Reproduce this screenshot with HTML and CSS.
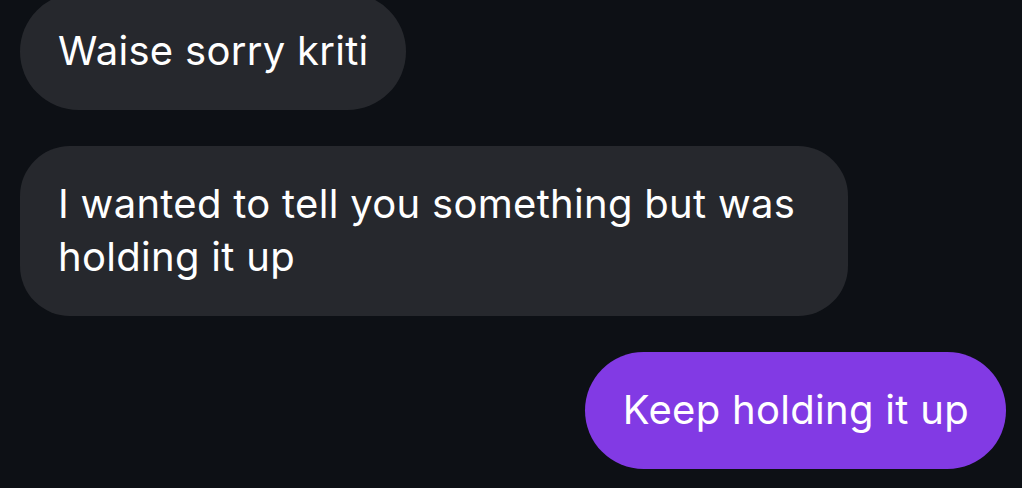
FILE: index.html
```html
<!DOCTYPE html>
<html lang="en">

<head>
    <meta charset="UTF-8">
    <meta name="viewport" content="width=device-width, initial-scale=1.0">
    <title>Chat</title>
    <link rel="stylesheet" href="styles.css">
</head>

<body>
    <div class="thread">
        <div class="bubble incoming">Waise sorry kriti</div>
        <div class="bubble incoming wide">I wanted to tell you something but was holding it up</div>
        <div class="bubble outgoing">Keep holding it up</div>
    </div>
</body>

</html>
```

FILE: styles.css
```css
/* General styles */
* {
    box-sizing: border-box;
}

html,
body {
    height: 100%;
}

body {
    font-family: Inter, "Noto Sans", sans-serif;
    margin: 0;
    padding: 0;
    background-color: #0d1015;
    color: #ffffff;
    overflow: hidden;
}

.thread {
    display: flex;
    flex-direction: column;
    gap: 36px;
    padding: 0 16px 0 20px;
    margin-top: -7px;
}

.bubble {
    font-size: 40px;
    line-height: 53px;
    letter-spacing: 0.3px;
    padding: 31px 37px 33px 38px;
    border-radius: 60px;
    max-width: 828px;
}

.incoming {
    align-self: flex-start;
    background-color: #26282d;
}

.wide {
    border-radius: 50px;
}

.outgoing {
    align-self: flex-end;
    background-color: #823ae4;
}
```
